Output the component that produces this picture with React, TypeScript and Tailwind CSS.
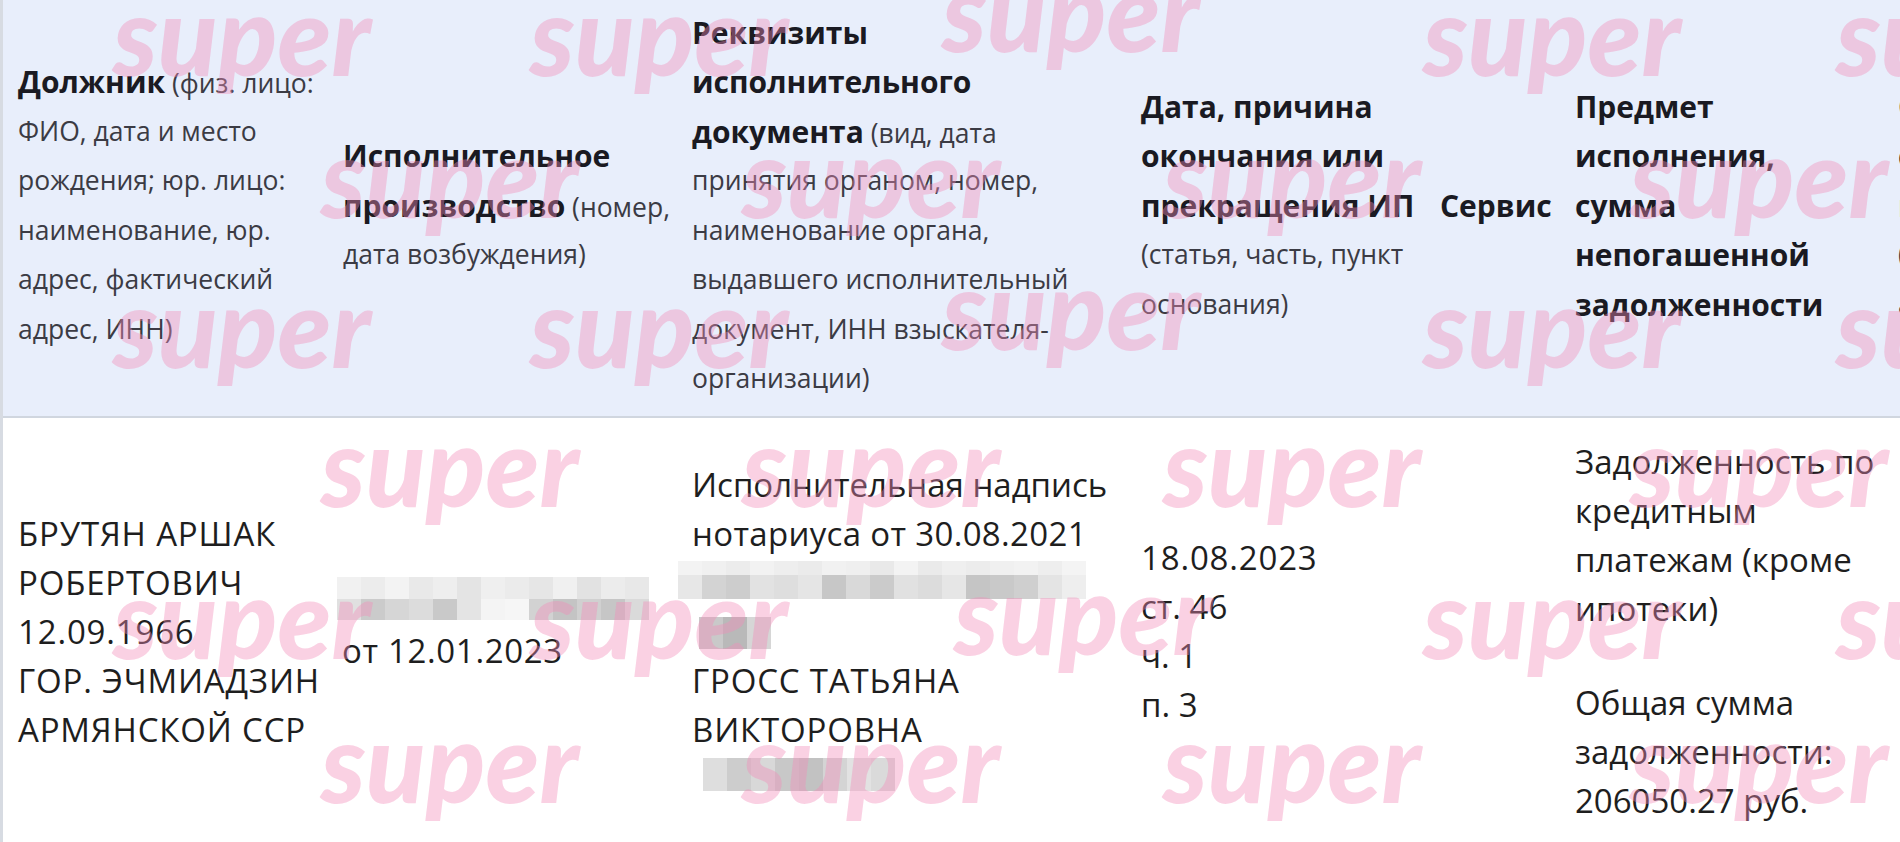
import React from "react";

type Line = React.ReactNode;

const marks = [
  { x: 113, y: 51 }, { x: 530, y: 51 }, { x: 942, y: 27 }, { x: 1423, y: 51 }, { x: 1836, y: 51 },
  { x: 321, y: 193 }, { x: 742, y: 193 }, { x: 1163, y: 193 }, { x: 1630, y: 193 },
  { x: 113, y: 343 }, { x: 530, y: 343 }, { x: 942, y: 325 }, { x: 1423, y: 343 }, { x: 1836, y: 343 },
  { x: 321, y: 482 }, { x: 742, y: 482 }, { x: 1163, y: 482 }, { x: 1630, y: 482 },
  { x: 113, y: 634 }, { x: 530, y: 634 }, { x: 954, y: 630 }, { x: 1423, y: 634 }, { x: 1836, y: 634 },
  { x: 321, y: 778 }, { x: 742, y: 778 }, { x: 1163, y: 778 }, { x: 1630, y: 778 },
];

function Lines({ lines, h = "h-[49.5px] leading-[49.5px]" }: { lines: Line[]; h?: string }) {
  return (
    <div>
      {lines.map((l, i) => (
        <div key={i} className={`${h} whitespace-nowrap`}>
          {l}
        </div>
      ))}
    </div>
  );
}

function B({ children }: { children: React.ReactNode }) {
  return <span className="text-[30px] font-bold text-[#1a1a22]">{children}</span>;
}

function S({ children }: { children: React.ReactNode }) {
  return <span className="text-[26.5px] text-[#3b3b44]">{children}</span>;
}

// uppercase / digits run a bit wider in the source font
function W({ children }: { children: React.ReactNode }) {
  return <span className="tracking-[0.025em]">{children}</span>;
}

function Mosaic({ rows, cell }: { rows: string[][]; cell: [number, number][] }) {
  return (
    <div className="flex flex-col">
      {rows.map((r, i) => (
        <div key={i} className="flex">
          {r.map((c, j) => (
            <div key={j} style={{ backgroundColor: c, width: cell[i][0], height: cell[i][1] }} />
          ))}
        </div>
      ))}
    </div>
  );
}

const mosaicNum = [
  ["#f1f1f1", "#ececec", "#f3f3f3", "#e9e9e9", "#eeeeee", "#e4e4e4", "#efefef", "#ebebeb", "#e6e6e6", "#f0f0f0", "#e2e2e2", "#ececec", "#e8e8e8"],
  ["#e0e0e0", "#cbcbcb", "#d6d6d6", "#dcdcdc", "#c9c9c9", "#e4e4e4", "#f4f4f4", "#f6f6f6", "#d2d2d2", "#c4c4c4", "#d0d0d0", "#c6c6c6", "#dadada"],
];

const mosaicDoc = [
  ["#f3f3f3", "#f0f0f0", "#ececec", "#f2f2f2", "#eeeeee", "#ebebeb", "#f1f1f1", "#efefef", "#e9e9e9", "#f3f3f3", "#eaeaea", "#efefef", "#ececec", "#f0f0f0", "#f2f2f2", "#eeeeee", "#f4f4f4"],
  ["#e7e7e7", "#d3d3d3", "#cdcdcd", "#e2e2e2", "#dedede", "#e5e5e5", "#c7c7c7", "#d9d9d9", "#cbcbcb", "#e1e1e1", "#dcdcdc", "#e6e6e6", "#c5c5c5", "#c9c9c9", "#cfcfcf", "#e4e4e4", "#eeeeee"],
];

const mosaicSmall = [["#c9c9c9", "#b9b9b9", "#d6d6d6"]];
const mosaicInn = [["#dedede", "#cdcdcd", "#d8d8d8", "#c8c8c8", "#c2c2c2", "#d4d4d4", "#e2e2e2", "#dadada"]];

export default function App() {
  const head = "h-[418px] flex items-center pb-[5px] bg-[#e8eefb] border-b-2 border-[#d0d6df]";
  const body = "h-[426px] flex items-center text-[33px] text-[#1e1e1e]";
  const bl = "h-[49px] leading-[49px]";

  return (
    <div className="relative w-[1900px] h-[842px] overflow-hidden bg-white font-['Open_Sans',sans-serif]">
      <div className="grid grid-cols-[330px_349px_449px_299px_135px_319px_300px] w-max border-l-[3px] border-[#d7dbe2]">
        <div className={`${head} pl-[15px]`}>
          <Lines
            lines={[
              <><B>Должник</B><S> (физ. лицо:</S></>,
              <S>ФИО, дата и место</S>,
              <S>рождения; юр. лицо:</S>,
              <S>наименование, юр.</S>,
              <S>адрес, фактический</S>,
              <S>адрес, ИНН)</S>,
            ]}
          />
        </div>
        <div className={`${head} pl-[10px]`}>
          <Lines
            lines={[
              <B>Исполнительное</B>,
              <><B>производство</B><S> (номер,</S></>,
              <S>дата возбуждения)</S>,
            ]}
          />
        </div>
        <div className={`${head} pl-[10px]`}>
          <Lines
            lines={[
              <B>Реквизиты</B>,
              <B>исполнительного</B>,
              <><B>документа</B><S> (вид, дата</S></>,
              <S>принятия органом, номер,</S>,
              <S>наименование органа,</S>,
              <S>выдавшего исполнительный</S>,
              <S>документ, ИНН взыскателя-</S>,
              <S>организации)</S>,
            ]}
          />
        </div>
        <div className={`${head} pl-[10px]`}>
          <Lines
            lines={[
              <B>Дата, причина</B>,
              <B>окончания или</B>,
              <B>прекращения ИП</B>,
              <S>(статья, часть, пункт</S>,
              <S>основания)</S>,
            ]}
          />
        </div>
        <div className={`${head} pl-[10px]`}>
          <Lines lines={[<B>Сервис</B>]} />
        </div>
        <div className={`${head} pl-[10px]`}>
          <Lines
            lines={[
              <B>Предмет</B>,
              <B>исполнения,</B>,
              <B>сумма</B>,
              <B>непогашенной</B>,
              <B>задолженности</B>,
            ]}
          />
        </div>
        <div className={`${head} pl-[14px]`}>
          <Lines
            lines={[
              <B>Отдел</B>,
              <B>судебных</B>,
              <B>приставов</B>,
              <S>(наименование,</S>,
              <S>адрес)</S>,
            ]}
          />
        </div>

        <div className={`${body} pl-[15px]`}>
          <Lines
            h={bl}
            lines={[
              <W>БРУТЯН АРШАК</W>,
              <W>РОБЕРТОВИЧ</W>,
              <W>12.09.1966</W>,
              <W>ГОР. ЭЧМИАДЗИН</W>,
              <W>АРМЯНСКОЙ ССР</W>,
            ]}
          />
        </div>
        <div className={`${body} pl-[4px]`}>
          <Lines
            h={bl}
            lines={[
              <div className="-mt-[10px]">
                <Mosaic rows={mosaicNum} cell={[[24, 22], [24, 21]]} />
              </div>,
              <span className="pl-[5px] tracking-[0.02em]">от 12.01.2023</span>,
            ]}
          />
        </div>
        <div className={`${body} pl-[10px]`}>
          <Lines
            h={bl}
            lines={[
              "Исполнительная надпись",
              <span className="tracking-[0.01em]">нотариуса от 30.08.2021</span>,
              <div className="pt-[3px] -ml-[14px]">
                <Mosaic rows={mosaicDoc} cell={[[24, 14], [24, 24]]} />
              </div>,
              <div className="pt-[10px] ml-[7px]">
                <Mosaic rows={mosaicSmall} cell={[[24, 32]]} />
              </div>,
              <W>ГРОСС ТАТЬЯНА</W>,
              <W>ВИКТОРОВНА</W>,
              <div className="pt-[4px] ml-[11px]">
                <Mosaic rows={mosaicInn} cell={[[24, 33]]} />
              </div>,
            ]}
          />
        </div>
        <div className={`${body} pl-[10px]`}>
          <Lines h={bl} lines={[<W>18.08.2023</W>, "ст. 46", "ч. 1", "п. 3"]} />
        </div>
        <div className={body} />
        <div className={`${body} pl-[10px]`}>
          <div className="flex flex-col gap-[45px]">
            <Lines h={bl} lines={["Задолженность по", "кредитным", "платежам (кроме", "ипотеки)"]} />
            <Lines h={bl} lines={["Общая сумма", "задолженности:", "206050.27 руб."]} />
          </div>
        </div>
        <div className={body} />
      </div>

      <div className="pointer-events-none absolute inset-0">
        {marks.map((m, i) => (
          <span
            key={i}
            className="absolute font-['Lato',sans-serif] text-[110px] font-black italic leading-none text-[#f38bb9]/40"
            style={{ left: m.x, top: m.y - 73 }}
          >
            super
          </span>
        ))}
      </div>
    </div>
  );
}
